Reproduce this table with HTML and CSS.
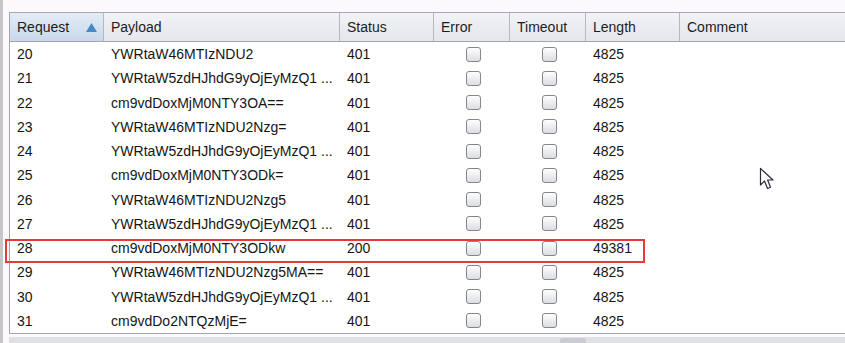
FILE: index.html
```html
<!DOCTYPE html>
<html lang="en">
<head>
    <meta charset="UTF-8">
    <meta name="viewport" content="width=device-width, initial-scale=1.0">
    <title>Intruder Results</title>
    <link rel="stylesheet" href="styles.css">
</head>
<body>
    <div class="window">
        <div class="edge"></div>
        <div class="panel">
            <div class="results">
                <div class="row head">
                    <div class="th sorted">Request
                        <svg class="sort-arrow" width="11" height="9" viewBox="0 0 11 9"><path d="M5.5 0 L11 9 L0 9 Z" fill="#4b86c6"/></svg>
                    </div>
                    <div class="th">Payload</div>
                    <div class="th">Status</div>
                    <div class="th">Error</div>
                    <div class="th">Timeout</div>
                    <div class="th">Length</div>
                    <div class="th">Comment</div>
                </div>
                <div class="body" id="rows">
                    <!-- result rows are added here -->
                </div>
            </div>
            <div class="hscroll"><div class="thumb"></div></div>
        </div>

        <div class="highlight"></div>
        <svg class="cursor" width="18" height="24" viewBox="0 0 18 24">
            <path d="M1.5 1.5 L1.5 18 L5.5 14 L8.5 21.5 L11.5 20.2 L8.6 13 L14 13 Z" fill="#fff" stroke="#2d2d3a" stroke-width="1.2" stroke-linejoin="round"/>
        </svg>
    </div>

    <script>
        const results = [
            { id: 20, payload: "YWRtaW46MTIzNDU2", status: 401, length: 4825 },
            { id: 21, payload: "YWRtaW5zdHJhdG9yOjEyMzQ1 ...", status: 401, length: 4825 },
            { id: 22, payload: "cm9vdDoxMjM0NTY3OA==", status: 401, length: 4825 },
            { id: 23, payload: "YWRtaW46MTIzNDU2Nzg=", status: 401, length: 4825 },
            { id: 24, payload: "YWRtaW5zdHJhdG9yOjEyMzQ1 ...", status: 401, length: 4825 },
            { id: 25, payload: "cm9vdDoxMjM0NTY3ODk=", status: 401, length: 4825 },
            { id: 26, payload: "YWRtaW46MTIzNDU2Nzg5", status: 401, length: 4825 },
            { id: 27, payload: "YWRtaW5zdHJhdG9yOjEyMzQ1 ...", status: 401, length: 4825 },
            { id: 28, payload: "cm9vdDoxMjM0NTY3ODkw", status: 200, length: 49381 },
            { id: 29, payload: "YWRtaW46MTIzNDU2Nzg5MA==", status: 401, length: 4825 },
            { id: 30, payload: "YWRtaW5zdHJhdG9yOjEyMzQ1 ...", status: 401, length: 4825 },
            { id: 31, payload: "cm9vdDo2NTQzMjE=", status: 401, length: 4825 }
        ];

        function renderResults(list) {
            const rows = document.getElementById('rows');
            rows.innerHTML = '';

            list.forEach(r => {
                const row = document.createElement('div');
                row.className = 'row';
                row.innerHTML = `
                    <div class="td">${r.id}</div>
                    <div class="td">${r.payload}</div>
                    <div class="td">${r.status}</div>
                    <div class="td check"><span class="box"></span></div>
                    <div class="td check"><span class="box"></span></div>
                    <div class="td">${r.length}</div>
                    <div class="td"></div>
                `;
                rows.appendChild(row);
            });
        }

        renderResults(results);
    </script>
</body>
</html>
```

FILE: styles.css
```css
body {
    margin: 0;
    font-family: 'Liberation Sans', Arial, sans-serif;
    font-size: 14px;
    color: #151515;
    background-color: #fcf9fc;
    overflow: hidden;
}

.window {
    position: relative;
    display: flex;
    width: 845px;
    height: 343px;
    overflow: hidden;
}

.edge {
    width: 3px;
    background-color: #c6c6c8;
    flex-shrink: 0;
}

.panel {
    flex: 1;
    padding: 12px 0 0 6px;
    min-width: 0;
}

.results {
    border-left: 1px solid #a4a6ae;
    border-bottom: 1px solid #a4a6ae;
    background-color: #fff;
}

.row {
    display: grid;
    grid-template-columns: 94px 236px 94px 76px 76px 94px 1fr;
    height: 24.25px;
}

.row.head {
    height: 30px;
    box-sizing: border-box;
    border-top: 1px solid #a9abb3;
    border-bottom: 1px solid #a4a6ae;
    background: linear-gradient(#f2f3f7, #e4e6ec);
}

.th {
    display: flex;
    align-items: center;
    padding: 0 7px;
    border-right: 1px solid #b6b8c0;
    color: #1c1c1c;
}

.th:last-child {
    border-right: none;
}

.th.sorted {
    justify-content: space-between;
    padding-right: 6px;
    background: linear-gradient(#e4ecf6, #c8d8ea);
}

.sort-arrow {
    margin-top: 1px;
}

.td {
    display: flex;
    align-items: center;
    padding: 0 7px;
    white-space: nowrap;
    overflow: hidden;
}

.td.check {
    justify-content: center;
    padding: 0 0 0 3px;
}

.box {
    width: 13px;
    height: 13px;
    border: 1px solid #84868e;
    border-radius: 3px;
    background: linear-gradient(#fefefe, #dcdde3);
}

.hscroll {
    height: 10px;
    margin-top: 3px;
    background-color: #dfe1e5;
    position: relative;
}

.thumb {
    position: absolute;
    left: 551px;
    top: 1px;
    width: 26px;
    height: 10px;
    border-radius: 3px;
    background-color: #c9ccd3;
}

.highlight {
    position: absolute;
    left: 5px;
    top: 239px;
    width: 640px;
    height: 24px;
    box-sizing: border-box;
    border: 2px solid #e63a3a;
}

.cursor {
    position: absolute;
    left: 759px;
    top: 167px;
}
```
